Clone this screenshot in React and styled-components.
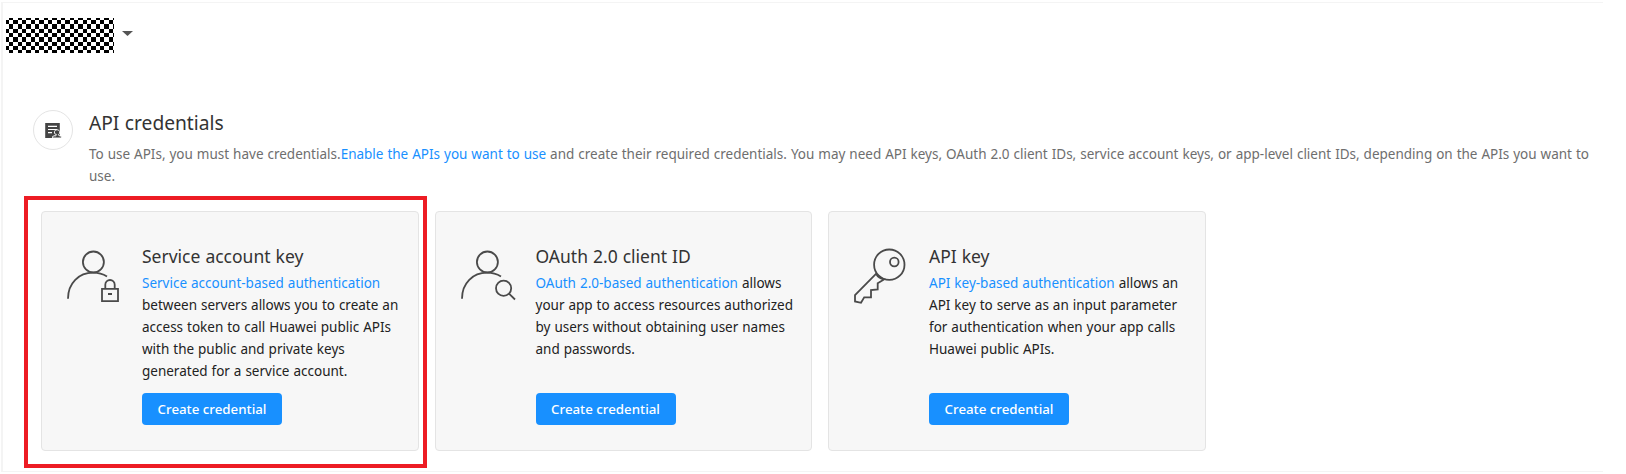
import React from "react";
import styled, { createGlobalStyle } from "styled-components";

const Global = createGlobalStyle`
  *, *::before, *::after { box-sizing: border-box; }
  body { margin: 0; background: #fff; font-family: "Noto Sans", sans-serif; font-size: 13.5px; line-height: 22px; word-spacing: 0.45px; color: #222; }
  h1, h2, p { margin: 0; font-weight: 400; }
`;

const Page = styled.div`
  height: 474px;
  padding: 2px 23px 2px 1px;
  overflow: hidden;
`;

const Panel = styled.main`
  width: 1602px;
  height: 470px;
  border: 1px solid #f4f4f4;
  border-width: 1px 0 1px 2px;
`;

const ProjectBar = styled.header`
  display: flex;
  align-items: center;
  gap: 8px;
  height: 35px;
  margin: 15px 0 0 3px;
`;

const ProjectName = styled.svg`
  width: 108px;
  height: 35px;
  background: #fff;
  fill: #000;
  shape-rendering: crispEdges;
`;

const Caret = styled.i`
  width: 11px;
  height: 5px;
  margin-bottom: 4px;
  background: #555;
  clip-path: polygon(0 0, 100% 0, 50% 100%);
`;

const Intro = styled.section`
  display: flex;
  gap: 16px;
  margin: 57px 0 0 30px;
`;

const RoundIcon = styled.div`
  display: flex;
  align-items: center;
  justify-content: center;
  flex: none;
  width: 40px;
  height: 40px;
  border: 1px solid #e4e4e4;
  border-radius: 50%;
`;

const Title = styled.h1`
  font-size: 19.2px;
  line-height: 26px;
  color: #333;
`;

const Lead = styled.p`
  margin-top: 7px;
  color: #6e6e6e;
`;

const Link = styled.a`
  color: #1890ff;
`;

const Cards = styled.section`
  display: flex;
  gap: 16px;
  margin: 24px 0 0 38px;
`;

const Card = styled.article`
  position: relative;
  display: flex;
  width: 377.5px;
  height: 240px;
  padding: 32px 18px 0 24px;
  background: #f7f7f7;
  border: 1px solid #e4e4e4;
  border-radius: 4px;
`;

const Highlight = styled.div`
  position: absolute;
  inset: -16px -9.5px -18px -18px;
  border: 4px solid #ed1c24;
`;

const CardIcon = styled.svg`
  flex: none;
  width: 60px;
  height: 60px;
  margin-right: 16px;
  fill: none;
  stroke: #4a4a4a;
  stroke-width: 1.8;
`;

const CardBody = styled.div`
  display: flex;
  flex-direction: column;
  align-items: flex-start;
`;

const CardTitle = styled.h2`
  margin-bottom: 4px;
  font-size: 17.5px;
  line-height: 24px;
  color: #333;
`;

const CardText = styled.p`
  height: 110px;
  white-space: nowrap;
`;

const Button = styled.button`
  width: 140px;
  height: 32px;
  margin-top: 11px;
  padding: 0;
  border: 0;
  border-radius: 4px;
  background: #1890ff;
  color: #fff;
  font: 500 13.3px/22px "Noto Sans", sans-serif;
`;

const CELL = 13 / 3;
const CELLS = Array.from({ length: 9 * 26 }, (_, i) => [i % 26, Math.floor(i / 26)])
  .filter(([col, row]) => (col + row) % 2 === 1);

const MaskedName = () => (
  <ProjectName viewBox="0 0 108 35">
    {CELLS.map(([col, row]) => (
      <rect
        key={`${col}-${row}`}
        x={col * CELL - 1.33}
        y={row * CELL - 2.33}
        width={CELL}
        height={CELL}
      />
    ))}
  </ProjectName>
);

const CredentialIcon = () => (
  <svg width="18" height="18" viewBox="0 0 18 18">
    <path d="M1.2 2h14.6v15H1.2z" fill="#444" />
    <path d="M4 5.4h9M4 8.5h9M4 11.6h4" stroke="#fff" strokeWidth="1.2" />
    <path
      d="M13 8.7a2.6 2.6 0 0 1 1.5 4.8l.3 1 2.8.9V17H8.6v-1.6l2.7-.9.3-1A2.6 2.6 0 0 1 13 8.7z"
      fill="#444"
      stroke="#fff"
      strokeWidth=".9"
    />
    <path d="M11.5 12.6l1.2.9-1.4 2" fill="none" stroke="#fff" strokeWidth=".7" />
  </svg>
);

const Person = () => (
  <>
    <circle cx="27.4" cy="18" r="10.5" />
    <path d="M2 54.7C2 39 13 28.7 27 28.7c5 0 10 1.3 14 3.7" />
  </>
);

const LockedUser = () => (
  <CardIcon viewBox="0 0 60 60">
    <Person />
    <path d="M36 44.8h16v12.3H36zM39.3 44.5v-3.8a4.7 4.7 0 0 1 9.4 0v3.8M42 50h4" />
  </CardIcon>
);

const SearchedUser = () => (
  <CardIcon viewBox="0 0 60 60">
    <Person />
    <circle cx="43.6" cy="44.3" r="7.6" />
    <path d="M49 49.7l6 5.8" />
  </CardIcon>
);

const Key = () => (
  <CardIcon viewBox="0 0 60 60">
    <circle cx="36.3" cy="20.7" r="15.2" />
    <circle cx="41.3" cy="18" r="4.3" />
    <path d="M23 29.8L2 51v6.5l6 1.3 3.2-5.5H18v-7.2l6.7-.6v-6.2l6.3-3.8c-3.6-.7-6.2-2.6-8-5.7z" />
  </CardIcon>
);

export default function App() {
  return (
    <Page>
      <Global />
      <Panel>
        <ProjectBar>
          <MaskedName />
          <Caret />
        </ProjectBar>
        <Intro>
          <RoundIcon>
            <CredentialIcon />
          </RoundIcon>
          <div>
            <Title>API credentials</Title>
            <Lead>
              To use APIs, you must have credentials.<Link>Enable the APIs you want to use</Link> and create their required credentials. You may need API keys, OAuth 2.0 client IDs, service account keys, or app-level client IDs, depending on the APIs you want to use.
            </Lead>
          </div>
        </Intro>
        <Cards>
          <Card>
            <LockedUser />
            <CardBody>
              <CardTitle>Service account key</CardTitle>
              <CardText><Link>Service account-based authentication</Link><br />between servers allows you to create an<br />access token to call Huawei public APIs<br />with the public and private keys<br />generated for a service account.</CardText>
              <Button>Create credential</Button>
            </CardBody>
            <Highlight />
          </Card>
          <Card>
            <SearchedUser />
            <CardBody>
              <CardTitle>OAuth 2.0 client ID</CardTitle>
              <CardText><Link>OAuth 2.0-based authentication</Link> allows<br />your app to access resources authorized<br />by users without obtaining user names<br />and passwords.</CardText>
              <Button>Create credential</Button>
            </CardBody>
          </Card>
          <Card>
            <Key />
            <CardBody>
              <CardTitle>API key</CardTitle>
              <CardText><Link>API key-based authentication</Link> allows an<br />API key to serve as an input parameter<br />for authentication when your app calls<br />Huawei public APIs.</CardText>
              <Button>Create credential</Button>
            </CardBody>
          </Card>
        </Cards>
      </Panel>
    </Page>
  );
}
